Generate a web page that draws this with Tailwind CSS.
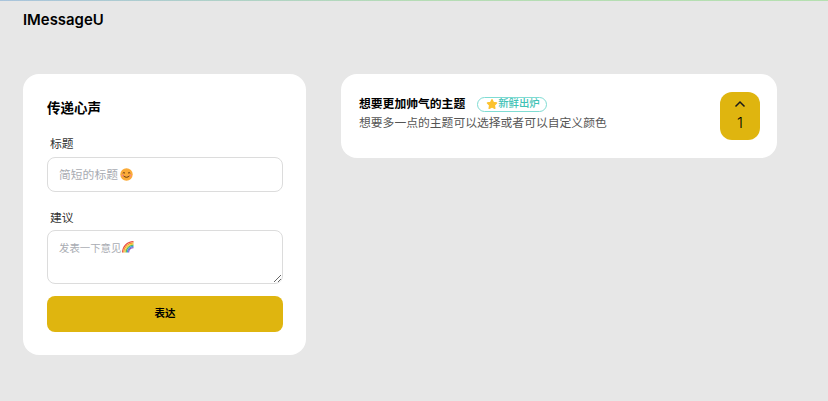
<!DOCTYPE html>
<html lang="zh-CN">

<head>
    <meta charset="UTF-8">
    <meta name="viewport" content="width=device-width, initial-scale=1.0">
    <title>IMessageU</title>
    <script src="https://cdn.jsdelivr.net/npm/@tailwindcss/browser@4"></script>
</head>

<body class="h-[401px] overflow-hidden bg-[#e7e7e7] font-['Inter','Noto_Sans_CJK_SC',sans-serif] text-black">
    <div class="h-px bg-gradient-to-r from-[#a9c4dc] via-[#b5dcb5] to-[#b5e0b0]"></div>

    <!-- Header -->
    <header class="h-[73px] pl-[23px] pt-[10px]">
        <p class="text-[14.9px] leading-[18px] font-semibold">IMessageU</p>
    </header>

    <main class="flex items-start pl-[23px]">
        <!-- Form -->
        <form class="w-[283px] h-[281px] bg-white rounded-2xl pl-6 pr-[23px] pt-6 flex flex-col">
            <h1 class="text-[13.5px] leading-5 font-semibold">传递心声</h1>
            <label class="mt-[18px] pl-[3px] text-[11.8px] leading-4 text-[#333]">标题</label>
            <div class="relative mt-[5px]">
                <input type="text" placeholder="简短的标题"
                    class="w-full h-[35px] pl-[11px] pr-3 bg-white border border-[#dcdcdc] rounded-lg outline-none text-[11.8px] placeholder:text-[#a9acb2]">
                <svg class="absolute left-[73px] top-[11px] w-[13px] h-[13px]" viewBox="0 0 13 13">
                    <circle cx="6.5" cy="6.5" r="6.2" fill="#fbab38" />
                    <path d="M2.8 5.2q1.1-1.3 2.2 0M8 5.2q1.1-1.3 2.2 0" fill="none" stroke="#6b3a12" stroke-width="1" />
                    <path d="M3.3 7.6q3.2 3.4 6.4 0" fill="none" stroke="#6b3a12" stroke-width="1" />
                    <circle cx="2.6" cy="7.4" r="1" fill="#f7858a" />
                    <circle cx="10.4" cy="7.4" r="1" fill="#f7858a" />
                </svg>
            </div>
            <label class="mt-[18px] pl-[3px] text-[11.8px] leading-4 text-[#333]">建议</label>
            <div class="relative mt-[4px]">
                <textarea placeholder="发表一下意见"
                    class="block w-full h-[54px] pl-[11px] pr-3 py-[10px] bg-white border border-[#dcdcdc] rounded-lg outline-none text-[10.4px] leading-4 placeholder:text-[#a9acb2]"></textarea>
                <svg class="absolute left-[75px] top-[11px] w-[12px] h-[12px]" viewBox="0 0 12 12" fill="none" stroke-width="1.2">
                    <path d="M.6 11.500C.6 5.500 5 .7 11.500.6" stroke="#e8483f" />
                    <path d="M1.800 11.500C1.800 6.200 6 1.900 11.500 1.800" stroke="#f59a2e" />
                    <path d="M3 11.500C3 7 6.600 3.100 11.500 3" stroke="#f7d038" />
                    <path d="M4.200 11.500C4.200 7.600 7.200 4.300 11.500 4.200" stroke="#5cb85c" />
                    <path d="M5.400 11.500C5.400 8.200 8 5.500 11.500 5.400" stroke="#3d9be0" />
                    <path d="M6.600 11.500C6.600 8.800 8.600 6.700 11.500 6.600" stroke="#8e5bc5" />
                </svg>
            </div>
            <button type="button"
                class="mt-3 h-9 bg-[#dfb50f] rounded-lg text-[10.5px] font-semibold text-black">表达</button>
        </form>

        <!-- Feature card -->
        <section class="ml-[35px] w-[436px] h-[84px] bg-white rounded-2xl pl-[18px] pr-[17px] flex items-center justify-between">
            <div class="-mt-[5px]">
                <div class="flex items-center">
                    <h2 class="text-[11.8px] leading-4 font-semibold">想要更加帅气的主题</h2>
                    <span class="ml-3 w-[70px] h-[15px] border border-[#7fdcd3] rounded-full flex items-center pl-[8px] text-[10.4px] leading-none font-medium text-[#3fc2b5]">
                        <svg class="w-[12px] h-[12px] shrink-0" viewBox="0 0 24 24" fill="#fcc22f">
                            <path d="M12 3.500l2.800 5.600 6.200.9-4.500 4.400 1.100 6.200L12 17.700l-5.600 2.900 1.100-6.200L3 10l6.200-.9z" stroke="#fcc22f" stroke-width="3" stroke-linejoin="round" />
                        </svg>
                        新鲜出炉
                    </span>
                </div>
                <p class="mt-[3px] text-[11.8px] leading-4 text-[#555]">想要多一点的主题可以选择或者可以自定义颜色</p>
            </div>
            <button type="button" class="w-10 h-12 bg-[#dfb50f] rounded-xl flex flex-col items-center justify-center text-black">
                <svg class="w-[12px] h-[8px]" viewBox="0 0 12 8" fill="none" stroke="#1a1a1a" stroke-width="1.5">
                    <path d="M1.500 6.500L6 2l4.500 4.500" />
                </svg>
                <span class="mt-[5px] text-[15px] leading-5 font-light">1</span>
            </button>
        </section>
    </main>
</body>

</html>
